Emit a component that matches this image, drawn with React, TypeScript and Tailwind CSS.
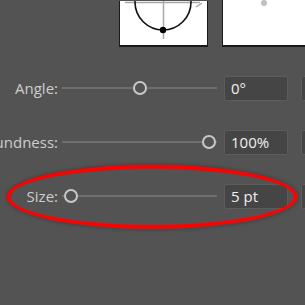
import React from 'react';

const font = { fontFamily: '"Open Sans", "Noto Sans", sans-serif' };

interface RowProps {
  label: string;
  value: string;
  thumb: number; // thumb position in px from track start
}

const SliderRow: React.FC<RowProps> = ({ label, value, thumb }) => (
  <div className="flex items-center h-[26px]">
    <div className="shrink-0 w-[58px] flex justify-end text-[15px] text-[#cdcdcd] whitespace-nowrap overflow-hidden">
      <span>{label}</span>
    </div>
    <div className="shrink-0 relative w-[155px] ml-[4px] h-[14px] flex items-center">
      <div className="w-full h-[2px] bg-[#6e6e6e]" />
      <div
        className="absolute top-0 w-[14px] h-[14px] -ml-[7px] rounded-full border-[2.5px] border-[#c8c8c8] bg-[#535353]"
        style={{ left: thumb }}
      />
    </div>
    <div className="shrink-0 ml-[7px] w-[64px] h-[25px] rounded-[2px] bg-[#454545] border border-[#5c5c5c] flex items-center pl-[6px] text-[15px] text-[#f0f0f0]">
      {value}
    </div>
    <div className="shrink-0 ml-[13px] w-[20px] h-[25px] rounded-[2px] bg-[#454545] border border-[#5c5c5c]" />
  </div>
);

export default function App() {
  return (
    <div className="relative w-[305px] h-[305px] overflow-hidden bg-[#535353]" style={font}>
      {/* preview tiles */}
      <div className="flex items-end pl-[119px] gap-[14px] h-[47px]">
        <div className="shrink-0 w-[89px] h-[46px] bg-white border-l border-b-2 border-r border-[#1a1a1a] overflow-hidden">
          <svg width="88" height="44" viewBox="0 0 88 44">
            <line x1="5" y1="1.5" x2="80" y2="1.5" stroke="#a8a8a8" strokeWidth="1.5" />
            <path d="M76 6 L82 2" stroke="#a8a8a8" strokeWidth="1.5" fill="none" />
            <line x1="43.5" y1="0" x2="43.5" y2="38" stroke="#a8a8a8" strokeWidth="1.5" />
            <circle cx="43" cy="1" r="28" stroke="#111" strokeWidth="1.6" fill="none" />
            <circle cx="43" cy="29" r="3.2" fill="#000" />
          </svg>
        </div>
        <div className="flex-1 h-[47px] bg-white border-l border-b-2 border-[#1a1a1a] relative">
          <div className="absolute left-[38px] top-0 w-[6px] h-[6px] rounded-full bg-[#c0c0c0]" />
        </div>
      </div>

      {/* sliders */}
      <div className="flex flex-col gap-[28px] mt-[28px]">
        <SliderRow label="Angle:" value="0°" thumb={78} />
        <SliderRow label="Roundness:" value="100%" thumb={147} />
        <SliderRow label="Size:" value="5 pt" thumb={9} />
      </div>

      {/* red annotation ellipse */}
      <div className="absolute left-[7px] top-[165px] w-[291px] h-[64px] rounded-[50%] border-[4px] border-[#ff0000] shadow-[0_0_4px_rgba(0,0,0,0.35)]" />
    </div>
  );
}
